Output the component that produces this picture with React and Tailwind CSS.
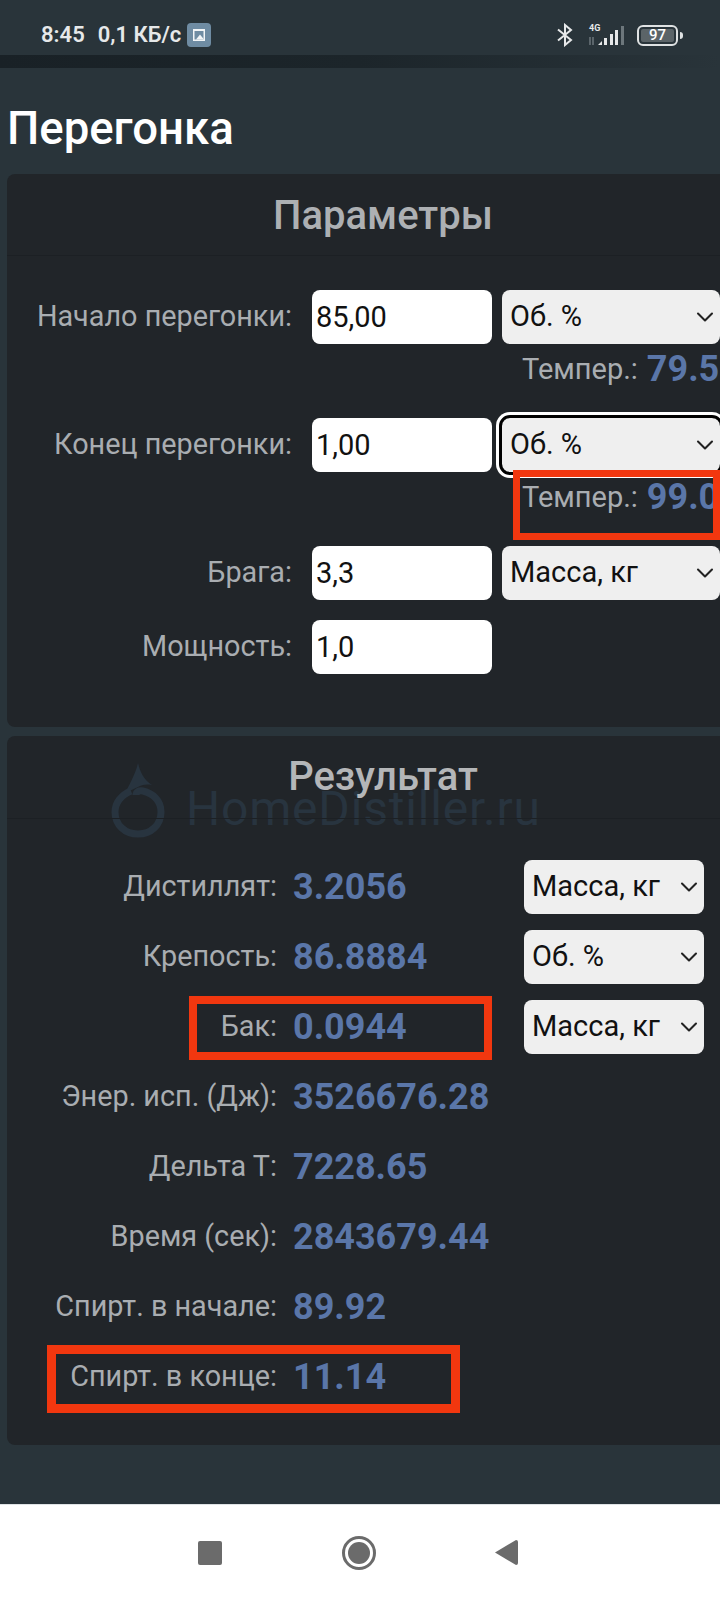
import { ChevronDown } from 'lucide-react'

const paramRows = [
  { label: 'Начало перегонки:', value: '85,00', unit: 'Об. %', temp: '79.5' },
  { label: 'Конец перегонки:', value: '1,00', unit: 'Об. %', temp: '99.0', focused: true },
  { label: 'Брага:', value: '3,3', unit: 'Масса, кг' },
  { label: 'Мощность:', value: '1,0' },
]

const resultRows = [
  { label: 'Дистиллят:', value: '3.2056', unit: 'Масса, кг' },
  { label: 'Крепость:', value: '86.8884', unit: 'Об. %' },
  { label: 'Бак:', value: '0.0944', unit: 'Масса, кг' },
  { label: 'Энер. исп. (Дж):', value: '3526676.28' },
  { label: 'Дельта Т:', value: '7228.65' },
  { label: 'Время (сек):', value: '2843679.44' },
  { label: 'Спирт. в начале:', value: '89.92' },
  { label: 'Спирт. в конце:', value: '11.14' },
]

const UnitSelect = ({ unit, className }) => (
  <div className={`relative shrink-0 h-[54px] ${className}`}>
    <select
      defaultValue={unit}
      className="w-full h-full appearance-none rounded-lg bg-[#efefef] pl-[8px] text-[29px] text-[#111] outline-none"
    >
      <option>{unit}</option>
    </select>
    <ChevronDown className="absolute right-[1px] top-[13px] w-[28px] h-[28px] text-[#222] pointer-events-none" strokeWidth={1.75} />
  </div>
)

const StatusBar = () => (
  <div className="h-[55px] shrink-0 flex items-center pt-[15px] pl-[41px] pr-[37px] text-[#e6e8e9] text-[22px] leading-[24px] font-semibold">
    <span>8:45</span>
    <span className="ml-[13px]">0,1 КБ/с</span>
    <div className="ml-[6px] w-[24px] h-[24px] rounded-[4px] bg-[#6f8ca3] flex items-center justify-center">
      <svg width="16" height="16" viewBox="0 0 16 16">
        <rect x="2" y="2" width="12" height="12" fill="#f2f5f7" />
        <rect x="3.5" y="4" width="9" height="8.5" fill="#6f8ca3" />
        <path d="M5 12.5 L9 7.5 L13 12.5 Z" fill="#f2f5f7" />
      </svg>
    </div>
    <div className="ml-auto flex items-center">
      <svg width="18" height="24" viewBox="0 0 18 24" fill="none" stroke="#e6e8e9" strokeWidth="2">
        <path d="M2 6.5 L15 17 L9 22 V2 L15 7 L2 17.5" />
      </svg>
      <svg className="ml-[14px]" width="38" height="24" viewBox="0 0 38 24">
        <text x="1" y="8" fontSize="9" fontWeight="700" fill="#e6e8e9" fontFamily="Roboto, sans-serif">4G</text>
        <path d="M2 14 V22 M5 22 V14" stroke="#7d878c" strokeWidth="1.2" />
        <path d="M10 22 L14 22 L14 18 Z" fill="#e6e8e9" />
        <rect x="16" y="15" width="3" height="7" fill="#e6e8e9" />
        <rect x="22" y="11" width="3" height="11" fill="#e6e8e9" />
        <rect x="27" y="7" width="3" height="15" fill="#e6e8e9" />
        <rect x="33" y="3" width="3" height="19" fill="#6d777c" />
      </svg>
      <div className="ml-[11px] w-[41px] h-[21px] rounded-[6px] border-2 border-[#dfe2e3] p-[2px] flex">
        <div className="flex-1 rounded-[2px] bg-[#5b6468] text-[15px] leading-[13px] font-medium text-center text-white">97</div>
      </div>
      <div className="ml-[2px] w-[3px] h-[7px] rounded-r-sm bg-[#dfe2e3]" />
    </div>
  </div>
)

const Watermark = () => (
  <div className="absolute left-[104px] top-[26px] flex items-end text-[#28343f] pointer-events-none">
    <svg width="54" height="76" viewBox="0 0 54 76" fill="none">
      <path d="M27 1 C29 10 33 18 41 23 C35 22 30 23 27 25 L14 31 C20 20 25 10 27 1 Z" fill="currentColor" />
      <path d="M20 29 C10 33 4 41 4 50 C4 63 14 72 27 72 C40 72 50 63 50 50 C50 38 41 31 32 29 C28 28 25 30 25 33" stroke="currentColor" strokeWidth="7" />
    </svg>
    <span className="ml-[21px] mb-[1px] text-[48px] leading-[56px] tracking-[0.8px]">HomeDistiller.ru</span>
  </div>
)

const App = () => {
  return (
    <div className="relative w-[720px] h-[1600px] overflow-hidden flex flex-col bg-[#29343a] font-['Roboto',sans-serif]">
      <StatusBar />
      <div className="h-[13px] shrink-0 bg-gradient-to-r from-[#192126] via-[#1c252a] to-[#29343a]" />

      <div className="flex-1 pl-[7px]">
        <h1 className="pt-[29px] h-[106px] text-[45.5px] leading-[64px] font-medium text-white">Перегонка</h1>

        <section className="w-[752px] h-[553px] rounded-lg bg-[#212529]">
          <h2 className="h-[82px] border-b border-[#1c2024] text-center text-[40px] leading-[84px] font-medium text-[#adb0b3]">Параметры</h2>
          <div className="pt-[34px] flex flex-col">
            {paramRows.map((row, i) => (
              <div key={row.label} className={i === 2 ? 'mb-[20px]' : ''}>
                <div className="flex items-center h-[54px]">
                  <label className="w-[285px] shrink-0 text-right text-[28.8px] text-[#a9adb1]">{row.label}</label>
                  <input
                    defaultValue={row.value}
                    className="ml-[20px] w-[180px] h-[54px] shrink-0 rounded-lg bg-white px-[4px] text-[29px] text-[#111] outline-none"
                  />
                  {row.unit && (
                    <UnitSelect
                      unit={row.unit}
                      className={`ml-[10px] w-[218px] ${row.focused ? 'rounded-lg outline-[3px] outline-black ring-[6px] ring-white' : ''}`}
                    />
                  )}
                </div>
                {row.temp && (
                  <div className="h-[74px] pl-[515px] flex items-start whitespace-nowrap">
                    <span className="mt-[5px] text-[29px] leading-[40px] text-[#a9adb1]">Темпер.:</span>
                    <span className="ml-[9px] mt-[3px] text-[36px] leading-[44px] font-bold text-[#5a76a8]">{row.temp}</span>
                  </div>
                )}
              </div>
            ))}
          </div>
        </section>

        <section className="relative mt-[9px] w-[752px] h-[709px] rounded-lg bg-[#212529]">
          <Watermark />
          <h2 className="relative h-[83px] border-b border-[#1c2024] text-center text-[40px] leading-[82px] font-medium text-[#b4b6b8]">Результат</h2>
          <div className="relative pt-[41px] flex flex-col gap-[16px]">
            {resultRows.map((row) => (
              <div key={row.label} className="flex items-center h-[54px]">
                <span className="w-[270px] shrink-0 text-right text-[28.8px] text-[#a9adb1]">{row.label}</span>
                <span className="ml-[16px] w-[231px] shrink-0 text-[36px] font-bold text-[#5a76a8]">{row.value}</span>
                {row.unit && <UnitSelect unit={row.unit} className="w-[180px]" />}
              </div>
            ))}
          </div>
        </section>
      </div>

      <nav className="h-[96px] shrink-0 bg-white border-t border-[#dfe3e5] flex items-center pl-[198px]">
        <div className="w-[24px] h-[24px] rounded-[2px] bg-[#6b6b6b]" />
        <div className="ml-[120px] w-[34px] h-[34px] rounded-full border-[3px] border-[#6b6b6b] p-[3px]">
          <div className="w-full h-full rounded-full bg-[#6b6b6b]" />
        </div>
        <svg className="ml-[118px]" width="24" height="27" viewBox="0 0 24 27">
          <path d="M1 13.5 L22 1 Q24 1 24 3 V24 Q24 26 22 26 Z" fill="#6b6b6b" />
        </svg>
      </nav>

      {/* red marks drawn over the screenshot */}
      <div className="absolute left-[513px] top-[470px] w-[207px] h-[70px] border-[7px] border-[#f2370f]" />
      <div className="absolute left-[189px] top-[996px] w-[303px] h-[64px] border-[8px] border-[#f2370f]" />
      <div className="absolute left-[47px] top-[1345px] w-[413px] h-[68px] border-[9px] border-[#f2370f]" />
    </div>
  )
}

export default App
